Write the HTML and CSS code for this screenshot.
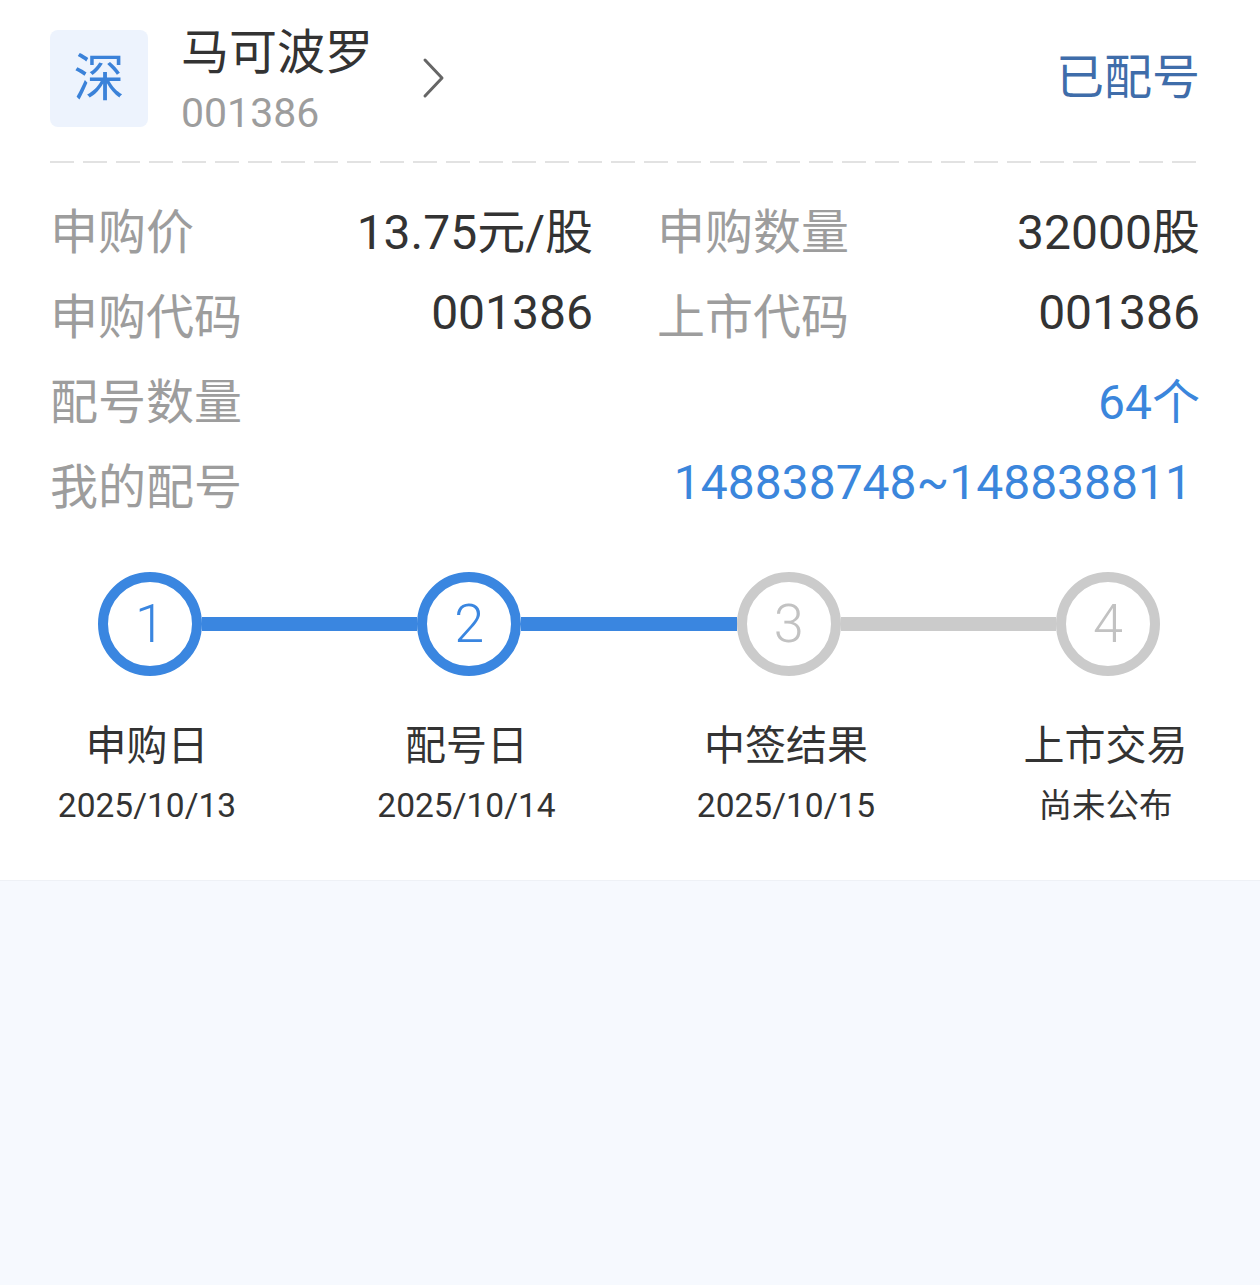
FILE: index.html
```html
<!DOCTYPE html>
<html lang="zh-CN">
<head>
<meta charset="utf-8">
<title>新股详情</title>
<link rel="stylesheet" href="styles.css">
</head>
<body>
<div class="card">
  <div class="header">
    <div class="badge">深</div>
    <div class="info">
      <div class="title">马可波罗</div>
      <div class="code">001386</div>
    </div>
    <svg class="chevron" width="26" height="42" viewBox="0 0 26 42"><polyline points="4,3 21,21 4,39" fill="none" stroke="#666" stroke-width="3" stroke-linecap="round" stroke-linejoin="round"/></svg>
    <div class="status">已配号</div>
  </div>
  <div class="dash"></div>
  <div class="grid">
    <div class="cell"><span class="label">申购价</span><span class="value">13.75元/股</span></div>
    <div class="cell"><span class="label">申购数量</span><span class="value">32000股</span></div>
    <div class="cell"><span class="label">申购代码</span><span class="value">001386</span></div>
    <div class="cell"><span class="label">上市代码</span><span class="value">001386</span></div>
    <div class="cell wide"><span class="label">配号数量</span><span class="value blue">64个</span></div>
    <div class="cell wide"><span class="label">我的配号</span><span class="value blue range">148838748~148838811</span></div>
  </div>
  <div class="track">
    <div class="circle on">1</div>
    <div class="line on"></div>
    <div class="circle on">2</div>
    <div class="line on"></div>
    <div class="circle">3</div>
    <div class="line"></div>
    <div class="circle">4</div>
  </div>
  <div class="steps">
    <div class="step"><div class="name">申购日</div><div class="date">2025/10/13</div></div>
    <div class="step"><div class="name">配号日</div><div class="date">2025/10/14</div></div>
    <div class="step"><div class="name">中签结果</div><div class="date">2025/10/15</div></div>
    <div class="step"><div class="name">上市交易</div><div class="date">尚未公布</div></div>
  </div>
</div>
</body>
</html>
```
FILE: styles.css
```css
* { box-sizing: border-box; }
html, body { margin: 0; padding: 0; }
body {
  background: #f6f9fe;
  font-family: "Roboto", "Noto Sans CJK SC", sans-serif;
  color: #333;
  width: 1260px;
  min-height: 1285px;
}
.card {
  background: #fff;
  padding: 25px 60px 54px 50px;
  border-bottom: 1px solid #eef1f6;
}
.header {
  display: flex;
  align-items: flex-start;
}
.badge {
  width: 98px;
  height: 97px;
  margin-top: 5px;
  border-radius: 8px;
  background: #edf3fd;
  color: #3b82d9;
  font-size: 51px;
  display: flex;
  align-items: center;
  justify-content: center;
  line-height: 1;
}
.info {
  margin-left: 33px;
  display: flex;
  flex-direction: column;
}
.title {
  font-size: 48px;
  line-height: 56px;
  color: #333;
}
.code {
  font-size: 41px;
  line-height: 48px;
  margin-top: 8px;
  color: #9d9d9d;
}
.chevron {
  margin-left: 48px;
  margin-top: 32px;
}
.status {
  margin-left: auto;
  margin-top: 23px;
  font-size: 48px;
  line-height: 60px;
  color: #3f6daa;
}
.dash {
  margin-top: 24px;
  height: 2px;
  background: linear-gradient(to right, #e2e2e2 24px, transparent 24px) 0 0 / 33px 2px repeat-x;
}
.grid {
  margin-top: 22px;
  display: grid;
  grid-template-columns: 1fr 1fr;
  column-gap: 64px;
  grid-auto-rows: 85px;
}
.cell {
  display: flex;
  align-items: center;
  justify-content: space-between;
  font-size: 48px;
}
.cell.wide { grid-column: 1 / 3; }
.label { color: #9d9d9d; }
.value { color: #333; }
.value.blue { color: #3b86dc; }
.value.range { padding-right: 8px; }
.track {
  margin: 47px 40px 0 48px;
  display: flex;
  align-items: center;
}
.circle {
  width: 104px;
  height: 104px;
  flex: none;
  border-radius: 50%;
  border: 10px solid #cbcbcb;
  background: #fff;
  color: #c2c2c2;
  font-size: 54px;
  font-weight: 300;
  display: flex;
  align-items: center;
  justify-content: center;
  line-height: 1;
}
.circle.on {
  border-color: #3a86e0;
  color: #3a86e0;
}
.line {
  flex: 1;
  height: 14px;
  background: #cbcbcb;
}
.line.on { background: #3a86e0; }
.steps {
  margin: 45px -60px 0 -53px;
  display: flex;
  gap: 19.5px;
}
.step {
  width: 300px;
  flex: none;
  text-align: center;
}
.name {
  font-size: 41px;
  line-height: 50px;
  color: #333;
}
.date {
  margin-top: 15px;
  font-size: 33.5px;
  line-height: 40px;
  color: #333;
}
```
